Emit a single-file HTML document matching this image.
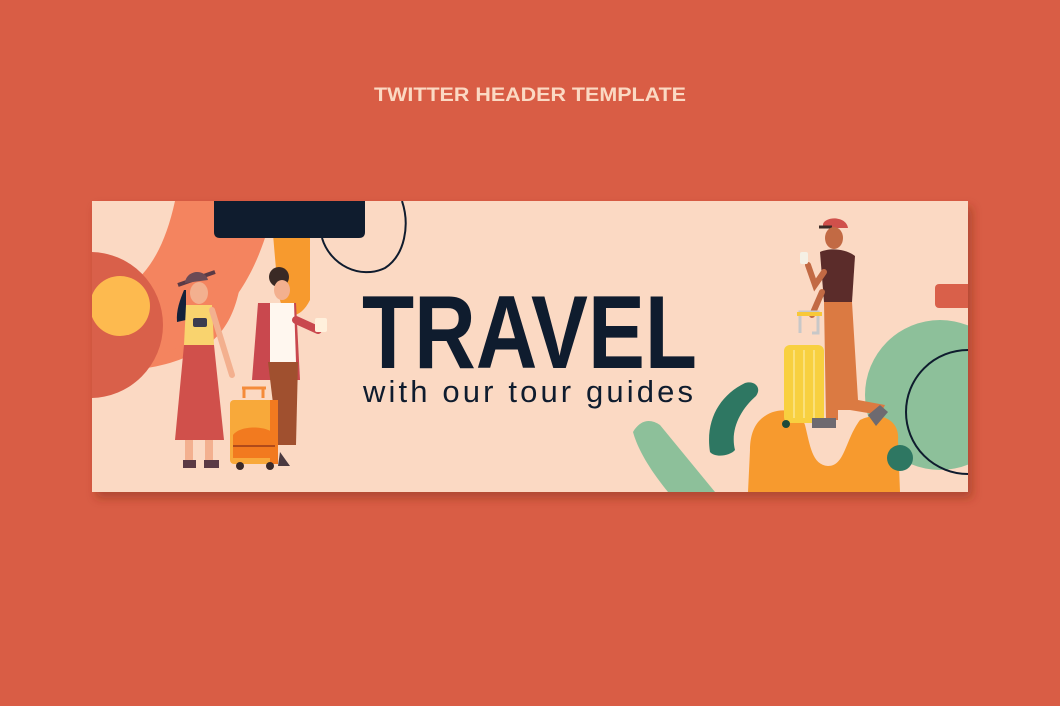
<!DOCTYPE html>
<html><head><meta charset="utf-8"><style>
html,body{margin:0;padding:0;background:#D95D45;width:1060px;height:706px;overflow:hidden}
</style></head><body>
<svg width="1060" height="706" viewBox="0 0 1060 706" xmlns="http://www.w3.org/2000/svg">
<defs>
<clipPath id="b"><rect x="92" y="201" width="876" height="291"/></clipPath>
<filter id="s" x="-5%" y="-10%" width="110%" height="130%"><feDropShadow dx="4" dy="6" stdDeviation="5" flood-color="#7a2a1a" flood-opacity="0.45"/></filter>
</defs>
<rect width="1060" height="706" fill="#D95D45"/>
<text x="530" y="101" text-anchor="middle" font-family="Liberation Sans,sans-serif" font-weight="bold" font-size="19" fill="#FBD9C3" textLength="312" lengthAdjust="spacingAndGlyphs">TWITTER HEADER TEMPLATE</text>
<rect x="92" y="201" width="876" height="291" fill="#FBD9C3" filter="url(#s)"/>
<g clip-path="url(#b)">
<!-- left shapes -->
<path d="M175 201 H250 C240 260 250 320 200 350 C170 368 130 372 92 372 V300 C130 295 160 270 175 201Z" fill="#F4845F"/>
<path d="M250 201 H275 C260 270 230 330 150 360 L140 340 C220 310 240 260 250 201Z" fill="#F4845F"/>
<path d="M270 201 H310 V300 C300 320 285 320 280 300 C276 280 274 240 270 201Z" fill="#F79A2E"/>
<circle cx="90" cy="325" r="73" fill="#D9604A"/>
<circle cx="120" cy="306" r="30" fill="#FDBA4F"/>
<path d="M214 201 H365 V232 Q365 238 359 238 H220 Q214 238 214 232Z" fill="#0F1C2E"/>
<path d="M322 238 C330 265 360 280 385 268 C405 255 410 225 402 201" fill="none" stroke="#0F1C2E" stroke-width="2"/>
<!-- right shapes -->
<circle cx="940" cy="395" r="75" fill="#8DC09A"/>
<circle cx="968" cy="412" r="62" fill="none" stroke="#0F1C2E" stroke-width="2"/>
<rect x="935" y="284" width="40" height="24" rx="4" fill="#D9604A"/>
<path d="M745 383 C755 380 762 388 756 396 C740 410 730 430 735 450 C730 456 715 458 710 452 C705 420 720 395 745 383Z" fill="#2E7762"/>
<path d="M633 432 C640 420 650 418 660 425 L715 492 H668 C650 470 638 450 633 432Z" fill="#8DC09A"/>
<path d="M760 420 C775 405 800 408 805 425 C810 445 812 465 828 466 C845 466 845 440 860 420 C880 410 900 420 898 440 L900 492 H748 L750 450 C750 440 752 428 760 420Z" fill="#F79A2E"/>
<circle cx="900" cy="458" r="13" fill="#2E7762"/>
<!-- woman -->
<path d="M178 285 L215 272" stroke="#5A3A45" stroke-width="4"/>
<path d="M185 283 C186 270 205 268 208 280Z" fill="#6B4A55"/>
<path d="M184 290 C180 300 176 310 177 322 L186 320 L186 290Z" fill="#14213A"/>
<ellipse cx="199" cy="293" rx="9" ry="11" fill="#F3B08F"/>
<path d="M186 305 H212 L214 345 H184Z" fill="#F9D36E"/>
<path d="M184 345 H214 L224 440 H175Z" fill="#D0504B"/>
<rect x="193" y="318" width="14" height="9" rx="2" fill="#3C3B4F"/>
<path d="M212 310 L232 375" stroke="#F3B08F" stroke-width="6" stroke-linecap="round"/>
<rect x="185" y="440" width="8" height="22" fill="#F3B08F"/><rect x="205" y="440" width="8" height="22" fill="#F3B08F"/>
<rect x="183" y="460" width="13" height="8" fill="#5A3A45"/><rect x="204" y="460" width="15" height="8" fill="#5A3A45"/>
<!-- man -->
<circle cx="279" cy="277" r="10" fill="#3A2A25"/>
<ellipse cx="282" cy="290" rx="8" ry="10" fill="#F3B08F"/>
<path d="M258 303 H296 L300 380 L252 380 Z" fill="#C9484E"/>
<path d="M270 303 H294 L296 362 H270Z" fill="#FFF7EF"/>
<path d="M296 320 L318 330" stroke="#C9484E" stroke-width="8" stroke-linecap="round"/>
<rect x="315" y="318" width="12" height="14" rx="2" fill="#FFF0DC"/>
<path d="M268 362 H298 L296 445 H278Z" fill="#A0502F"/>
<path d="M280 452 L290 466 L278 466Z" fill="#4A3A40"/>
<!-- suitcase -->
<path d="M242 388 H266 M244 388 V398 M263 388 V398" stroke="#F48B3A" stroke-width="3"/>
<rect x="230" y="400" width="48" height="64" rx="4" fill="#F8A93A"/>
<rect x="270" y="400" width="8" height="64" fill="#F27A1F"/>
<path d="M233 435 C240 425 268 425 275 435 V458 H233Z" fill="#F27A1F"/>
<line x1="233" y1="446" x2="275" y2="446" stroke="#B04A1A" stroke-width="2"/>
<circle cx="240" cy="466" r="4" fill="#3A2A2A"/><circle cx="270" cy="466" r="4" fill="#3A2A2A"/>
<!-- right man -->
<path d="M823 224 C826 216 846 216 848 228 L823 228Z" fill="#D0504B"/>
<path d="M819 227 H832" stroke="#3A2A25" stroke-width="3"/>
<ellipse cx="834" cy="238" rx="9" ry="11" fill="#C26A44"/>
<path d="M820 252 C828 248 845 248 855 256 L852 302 H824Z" fill="#5B2C2A"/>
<path d="M824 302 H852 L858 400 L885 405 L880 415 L850 410 L838 410 L838 420 L826 420Z" fill="#DB7A42"/>
<path d="M808 265 L815 285 L824 272" fill="none" stroke="#C26A44" stroke-width="6" stroke-linecap="round"/>
<rect x="800" y="252" width="8" height="12" rx="2" fill="#F5F0E5"/>
<path d="M812 315 L822 292" stroke="#C26A44" stroke-width="6" stroke-linecap="round"/>
<path d="M812 333 H818 V312 H800 V333" fill="none" stroke="#C8C8C8" stroke-width="3"/>
<rect x="797" y="312" width="25" height="4" fill="#F8C838"/>
<rect x="784" y="345" width="40" height="78" rx="6" fill="#F8D040"/>
<path d="M794 350 V418 M804 350 V418 M814 350 V418" stroke="#FBE07A" stroke-width="2"/>
<circle cx="786" cy="424" r="4" fill="#1E4A3A"/>
<path d="M812 418 H836 V428 H812Z" fill="#6E6A70"/>
<path d="M868 415 L880 405 L888 412 L876 426Z" fill="#6E6A70"/>
<!-- text -->
<text x="362" y="368" font-family="Liberation Sans,sans-serif" font-weight="bold" font-size="104" fill="#0F1C2E" textLength="335" lengthAdjust="spacingAndGlyphs">TRAVEL</text>
<text x="363" y="402" font-family="Liberation Sans,sans-serif" font-size="31" fill="#0F1C2E" textLength="330" lengthAdjust="spacing">with our tour guides</text>
</g>
</svg>
</body></html>
